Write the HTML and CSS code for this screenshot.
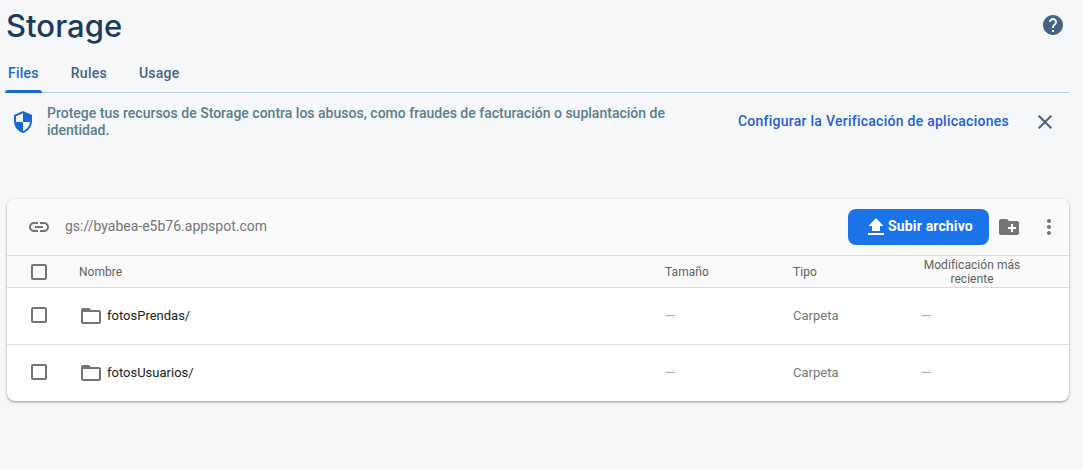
FILE: index.html
```html
<!DOCTYPE html>
<html lang="es">
<head>
<meta charset="utf-8">
<title>Storage</title>
<link rel="stylesheet" href="styles.css">
</head>
<body>
<header class="header">
  <h1 class="title">Storage</h1>
  <svg class="icon help" viewBox="0 0 24 24"><path d="M12 2C6.48 2 2 6.48 2 12s4.48 10 10 10 10-4.48 10-10S17.52 2 12 2zm1 17h-2v-2h2v2zm2.07-7.75l-.9.92C13.45 12.9 13 13.5 13 15h-2v-.5c0-1.1.45-2.1 1.17-2.83l1.24-1.26c.37-.36.59-.86.59-1.41 0-1.1-.9-2-2-2s-2 .9-2 2H8c0-2.21 1.79-4 4-4s4 1.79 4 4c0 .88-.36 1.68-.93 2.25z"/></svg>
</header>
<nav class="tabs">
  <a class="tab active">Files</a>
  <a class="tab">Rules</a>
  <a class="tab">Usage</a>
</nav>
<section class="notice">
  <svg class="icon shield" viewBox="0 0 24 24"><path d="M12 1L3 5v6c0 5.55 3.84 10.74 9 12 5.16-1.26 9-6.45 9-12V5l-9-4zm0 10.99h7c-.53 4.12-3.28 7.79-7 8.94V12H5V6.3l7-3.11v8.8z"/></svg>
  <p class="notice-text">Protege tus recursos de Storage contra los abusos, como fraudes de facturación o suplantación de<br>identidad.</p>
  <a class="notice-link">Configurar la Verificación de aplicaciones</a>
  <svg class="icon close" viewBox="0 0 24 24"><path d="M19 6.41L17.59 5 12 10.59 6.41 5 5 6.41 10.59 12 5 17.59 6.41 19 12 13.41 17.59 19 19 17.59 13.41 12z"/></svg>
</section>
<main class="card">
  <div class="toolbar">
    <svg class="icon link" viewBox="0 0 24 24"><path d="M3.9 12c0-1.71 1.39-3.1 3.1-3.1h4V7H7c-2.76 0-5 2.24-5 5s2.24 5 5 5h4v-1.9H7c-1.71 0-3.1-1.39-3.1-3.1zM8 13h8v-2H8v2zm9-6h-4v1.9h4c1.71 0 3.1 1.39 3.1 3.1s-1.39 3.1-3.1 3.1h-4V17h4c2.76 0 5-2.24 5-5s-2.24-5-5-5z"/></svg>
    <span class="bucket">gs://byabea-e5b76.appspot.com</span>
    <button class="upload"><svg class="upload-icon" viewBox="0 0 16 18"><path d="M8 0l7.500 8H12v5H4V8H.5zM0 15h16v2H0z"/></svg><span>Subir archivo</span></button>
    <svg class="icon new-folder" viewBox="0 0 24 24"><path d="M20 6h-8l-2-2H4c-1.110 0-1.990.89-1.990 2L2 18c0 1.110.89 2 2 2h16c1.110 0 2-.89 2-2V8c0-1.110-.89-2-2-2zm-1 8h-3v3h-2v-3h-3v-2h3V9h2v3h3v2z"/></svg>
    <svg class="icon more" viewBox="0 0 24 24"><path d="M12 8c1.100 0 2-.9 2-2s-.9-2-2-2-2 .9-2 2 .9 2 2 2zm0 2c-1.100 0-2 .9-2 2s.9 2 2 2 2-.9 2-2-.9-2-2-2zm0 6c-1.100 0-2 .9-2 2s.9 2 2 2 2-.9 2-2-.9-2-2-2z"/></svg>
  </div>
  <div class="row head">
    <span class="checkbox"></span>
    <span>Nombre</span>
    <span>Tamaño</span>
    <span>Tipo</span>
    <span class="modified">Modificación más<br>reciente</span>
  </div>
  <div class="row">
    <span class="checkbox"></span>
    <span class="name"><svg class="icon" viewBox="0 0 24 24"><path d="M20 6h-8l-2-2H4c-1.100 0-1.990.9-1.990 2L2 18c0 1.100.9 2 2 2h16c1.100 0 2-.9 2-2V8c0-1.100-.9-2-2-2zm0 12H4V8h16v10z"/></svg>fotosPrendas/</span>
    <span class="dash">—</span>
    <span>Carpeta</span>
    <span class="dash">—</span>
  </div>
  <div class="row">
    <span class="checkbox"></span>
    <span class="name"><svg class="icon" viewBox="0 0 24 24"><path d="M20 6h-8l-2-2H4c-1.100 0-1.990.9-1.990 2L2 18c0 1.100.9 2 2 2h16c1.100 0 2-.9 2-2V8c0-1.100-.9-2-2-2zm0 12H4V8h16v10z"/></svg>fotosUsuarios/</span>
    <span class="dash">—</span>
    <span>Carpeta</span>
    <span class="dash">—</span>
  </div>
</main>
</body>
</html>
```
FILE: styles.css
```css
* { box-sizing: border-box; }
body {
  margin: 0;
  height: 470px;
  padding: 0 14px 0 5px;
  background: #f6f7f9;
  font-family: Roboto, sans-serif;
  color: #757575;
  overflow: hidden;
}
.icon { width: 24px; height: 24px; fill: currentColor; flex: none; display: block; }
.header {
  display: flex;
  justify-content: space-between;
  height: 54px;
  padding: 6px 4px 0 1px;
}
.title {
  margin: 0;
  font: 450 31px/40px Inter, sans-serif;
  letter-spacing: .05px;
  color: #1a3b5c;
}
.help { color: #476282; margin-top: 7px; }
.tabs {
  display: flex;
  height: 39px;
  border-bottom: 1px solid #b8cade;
}
.tab {
  position: relative;
  padding: 10px 3px 0;
  margin-right: 26px;
  font-size: 14px;
  line-height: 18px;
  font-weight: 500;
  letter-spacing: .25px;
  color: #476282;
}
.tab.active { color: #1967d2; }
.tab.active::after {
  content: "";
  position: absolute;
  left: 0;
  right: 0;
  bottom: -1px;
  height: 3px;
  border-radius: 3px 3px 0 0;
  background: #1967d2;
}
.notice {
  display: flex;
  align-items: flex-start;
  height: 106px;
  padding: 12px 12px 0 6px;
  font-size: 14px;
  font-weight: 500;
  white-space: nowrap;
}
.shield { color: #1967d2; margin-top: 5px; }
.notice-text { margin: 0 0 0 12px; line-height: 17px; letter-spacing: .01px; color: #5a7f88; }
.notice-link { margin: 7px 24px 0 auto; line-height: 18px; letter-spacing: .26px; color: #1f5fd6; }
.close { width: 24px; color: #476282; margin-top: 5px; }
.card {
  width: 1062px;
  margin-left: 2px;
  border-radius: 8px;
  background: #fff;
  overflow: hidden;
  box-shadow: 0 1px 3px rgba(0,0,0,.25), 0 1px 2px rgba(0,0,0,.2);
}
.toolbar {
  display: flex;
  align-items: center;
  height: 57px;
  padding: 0 8px 0 20px;
  background: #fafafa;
  border-bottom: 1px solid #dcdcdc;
}
.bucket { margin: 0 auto 2px 14px; font-size: 14px; }
.upload {
  display: flex;
  align-items: center;
  justify-content: center;
  gap: 4px;
  width: 141px;
  height: 36px;
  margin-right: 8px;
  padding: 0 0 2px 4px;
  border: 0;
  border-radius: 8px;
  background: #1a73e8;
  color: #fff;
  font: 700 14px/18px Roboto, sans-serif;
  letter-spacing: .15px;
}
.upload-icon { width: 16px; height: 18px; margin-top: 2px; fill: #fff; }
.more { margin-left: 16px; }
.row {
  display: grid;
  grid-template-columns: 48px 586px 128px 128px 1fr;
  align-items: center;
  height: 57px;
  padding: 0 0 2px 24px;
  border-bottom: 1px solid #e0e0e0;
  font-size: 13px;
}
.row:last-child { height: 56px; border-bottom: 0; }
.head {
  height: 32px;
  padding-bottom: 0;
  background: #fafafa;
  border-bottom-color: #dcdcdc;
  font-size: 12px;
  line-height: 14px;
  color: #616161;
  letter-spacing: .05px;
}
.modified { width: 102px; text-align: center; }
.checkbox {
  width: 16px;
  height: 16px;
  border: 2px solid #757575;
  border-radius: 2px;
}
.name { display: flex; align-items: center; gap: 4px; color: #212121; }
.name .icon { color: #757575; margin-top: 1px; }
.dash { font-size: 13px; color: #a8a8a8; }
```
